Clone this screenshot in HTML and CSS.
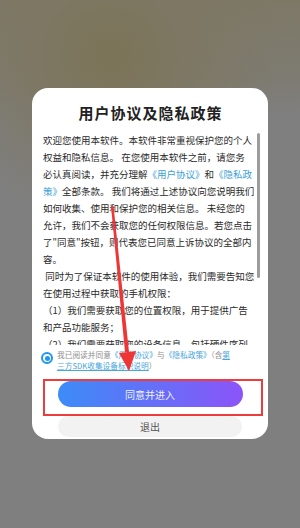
FILE: index.html
```html
<!DOCTYPE html>
<html lang="zh-CN">
<head>
  <meta charset="UTF-8" />
  <meta name="viewport" content="width=device-width, initial-scale=1.0" />
  <title>用户协议及隐私政策</title>
  <link rel="stylesheet" href="styles.css">
</head>
<body>
  <div class="screen">
    <div class="dialog">
      <h1 class="title">用户协议及隐私政策</h1>
      <div class="terms">
        <p>
        欢迎您使用本软件。本软件非常重视保护您的个人<br>
        权益和隐私信息。 在您使用本软件之前，请您务<br>
        必认真阅读，并充分理解<a>《用户协议》</a>和<a>《隐私政<br>
        策》</a>全部条款。 我们将通过上述协议向您说明我们<br>
        如何收集、使用和保护您的相关信息。 未经您的<br>
        允许，我们不会获取您的任何权限信息。若您点击<br>
        了"同意"按钮，则代表您已同意上诉协议的全部内<br>
        容。<br>
        &nbsp;同时为了保证本软件的使用体验，我们需要告知您<br>
        在使用过程中获取的手机权限：<br>
        （1）我们需要获取您的位置权限，用于提供广告<br>
        和产品功能服务；<br>
        （2）我们需要获取您的设备信息，包括硬件序列<br>
        号、设备MAC地址、IMEI等，用于保障账号与系<br>
        统运行安全；<br>
        （3）我们需要获取您的存储权限，用于缓存图片<br>
        和视频内容，减少流量消耗。<br>
        您可以在系统设置中随时关闭上述权限。
        </p>
      </div>
      <div class="scroll-thumb"></div>
      <div class="agree">
        <span class="radio"></span>
        <p>我已阅读并同意<a>《用户协议》</a>与<a>《隐私政策》</a>（含<a class="u">第<br>三方SDK收集设备标识说明</a>）</p>
      </div>
      <button class="btn-agree">同意并进入</button>
      <button class="btn-exit">退出</button>
      <div class="mark"></div>
    </div>

    <!-- 标注箭头 -->
    <svg class="arrow" viewBox="0 0 300 528" width="300" height="528">
      <polygon points="111,206 113.5,206 129,352 125,352" fill="#ee3636"/>
      <polygon points="119,353 136,351 129,371" fill="#ee3636"/>
    </svg>
  </div>
</body>
</html>
```

FILE: styles.css
```css
body {
  margin: 0;
  font-family: "Noto Sans CJK SC", "Noto Sans", sans-serif;
}
.screen {
  position: relative;
  height: 528px;
  padding-top: 88px;
  box-sizing: border-box;
  overflow: hidden;
  background:
    radial-gradient(circle at 110px 55px, #7c7457 0, #7d7763 70px, rgba(127,127,127,0) 170px),
    linear-gradient(180deg, #7d7866 0, #7e7b72 80px, #7f7f7f 115px);
  background-color: #7f7f7f;
}
.dialog {
  position: relative;
  width: 236px;
  margin: 0 auto;
  padding: 14px 0 2px;
  background: #fff;
  border-radius: 16px;
}
.title {
  margin: 0;
  font-size: 15px;
  line-height: 22px;
  letter-spacing: 1px;
  padding-left: 1px;
  text-align: center;
  font-weight: bold;
  color: #222;
}
.terms {
  margin: 8px 8px 0 11px;
  height: 213px;
  overflow-y: auto;
  white-space: nowrap;
  font-size: 9.5px;
  line-height: 17px;
  color: #2a2a2a;
}
.terms p {
  margin: 0;
  padding-bottom: 7px;
}
.scroll-thumb {
  position: absolute;
  left: 225px;
  top: 45px;
  width: 2.5px;
  height: 145px;
  border-radius: 2px;
  background: #9c9c9c;
}
.terms a { color: #3a9fd6; }
.agree a { color: #4aa6dc; }
.agree {
  display: flex;
  align-items: flex-start;
  gap: 4px;
  margin: 4px 10px 0 9px;
}
.agree p {
  margin: 0;
  font-size: 7.7px;
  line-height: 11px;
  color: #8e8e8e;
  white-space: nowrap;
}
.agree a.u { text-decoration: underline; }
.radio {
  flex: none;
  width: 12px;
  height: 12px;
  margin-top: 3px;
  border: 2px solid #1e95f0;
  border-radius: 50%;
  box-sizing: border-box;
  display: grid;
  place-items: center;
}
.radio::after {
  content: "";
  width: 5px;
  height: 5px;
  border-radius: 50%;
  background: #1e95f0;
}
button {
  display: block;
  border: none;
  padding: 0;
  font-family: inherit;
  font-size: 10px;
  text-align: center;
}
.btn-agree {
  width: 185px;
  height: 26px;
  margin: 10px auto 0;
  border-radius: 13px;
  background: linear-gradient(90deg, #3c8cf8, #8b54f8);
  color: rgba(255,255,255,0.92);
}
.btn-exit {
  width: 184px;
  height: 21px;
  margin: 9px auto 0;
  border-radius: 11px;
  background: #f2f2f2;
  color: #555;
}
.mark {
  position: absolute;
  left: 11px;
  top: 291px;
  width: 220px;
  height: 37px;
  border: 2px solid #ee3b3b;
  box-sizing: border-box;
}
.arrow {
  position: absolute;
  left: 0;
  top: 0;
  pointer-events: none;
}
```
